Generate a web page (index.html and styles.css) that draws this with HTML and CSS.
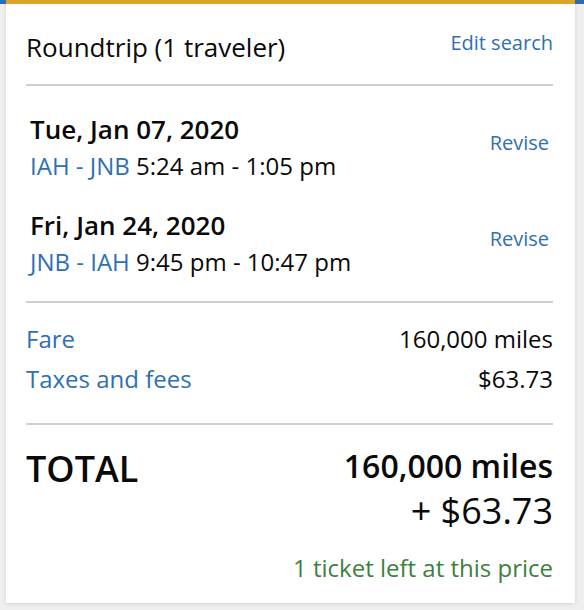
FILE: index.html
```html
<!DOCTYPE html>
<html lang="en">
<head>
    <meta charset="UTF-8">
    <meta name="viewport" content="width=device-width, initial-scale=1.0">
    <title>Trip summary</title>
    <link rel="stylesheet" href="styles.css">
</head>
<body>
    <div class="card">
        <div class="resumen-header">
            <span class="trip-type">Roundtrip (1 traveler)</span>
            <a href="#" class="link">Edit search</a>
        </div>

        <div class="vuelos">
            <div class="vuelo">
                <div class="vuelo-info">
                    <div class="fecha">Tue, Jan 07, 2020</div>
                    <div class="ruta"><span class="link">IAH - JNB</span> 5:24 am - 1:05 pm</div>
                </div>
                <a href="#" class="link revise">Revise</a>
            </div>
            <div class="vuelo">
                <div class="vuelo-info">
                    <div class="fecha">Fri, Jan 24, 2020</div>
                    <div class="ruta"><span class="link">JNB - IAH</span> 9:45 pm - 10:47 pm</div>
                </div>
                <a href="#" class="link revise">Revise</a>
            </div>
        </div>

        <div class="precios">
            <div class="fila">
                <a href="#" class="link">Fare</a>
                <span>160,000 miles</span>
            </div>
            <div class="fila">
                <a href="#" class="link">Taxes and fees</a>
                <span>$63.73</span>
            </div>
        </div>

        <div class="total">
            <div class="total-label">TOTAL</div>
            <div class="total-valor">
                <div class="total-millas">160,000 miles</div>
                <div class="total-dinero">+ $63.73</div>
                <div class="disponible">1 ticket left at this price</div>
            </div>
        </div>
    </div>
</body>
</html>
```

FILE: styles.css
```css
body {
    margin: 0;
    padding: 0 9px 0 6px;
    font-family: "Open Sans", Arial, sans-serif;
    color: #0a0a0a;
    background: linear-gradient(#2d6cb2 0 4px, #efefef 4px);
    min-height: 610px;
    box-sizing: border-box;
}
.card {
    background-color: white;
    border-top: 4px solid #d9a52b;
    padding: 0 22px 17px 20px;
    box-shadow: 0 1px 4px rgba(0,0,0,0.12);
}
.link {
    color: #2f6fb3;
    text-decoration: none;
}
.resumen-header {
    display: flex;
    justify-content: space-between;
    align-items: flex-start;
    padding: 25px 0 19px;
    border-bottom: 2px solid #cfcfcf;
}
.trip-type {
    font-size: 26px;
    line-height: 36px;
}
.resumen-header .link {
    font-size: 20px;
    line-height: 28px;
}
.vuelos {
    padding: 25px 4px 21px;
    border-bottom: 2px solid #cfcfcf;
}
.vuelo {
    display: flex;
    justify-content: space-between;
    align-items: center;
}
.vuelo + .vuelo {
    margin-top: 23px;
}
.fecha {
    font-size: 26px;
    font-weight: 600;
    line-height: 36px;
}
.ruta {
    font-size: 24px;
    line-height: 37px;
}
.revise {
    font-size: 20px;
    padding-bottom: 11px;
}
.precios {
    padding: 16px 0 24px;
    border-bottom: 2px solid #cfcfcf;
}
.fila {
    display: flex;
    justify-content: space-between;
    font-size: 24px;
    line-height: 40px;
}
.total {
    display: flex;
    justify-content: space-between;
    padding-top: 19px;
}
.total-label {
    font-size: 36px;
    font-weight: 600;
    line-height: 44px;
    padding-top: 3px;
}
.total-valor {
    text-align: right;
}
.total-millas {
    font-size: 32px;
    font-weight: 600;
    line-height: 44px;
}
.total-dinero {
    font-size: 36px;
    line-height: 46px;
}
.disponible {
    margin-top: 16px;
    font-size: 24px;
    line-height: 36px;
    color: #3e7f40;
}
```
